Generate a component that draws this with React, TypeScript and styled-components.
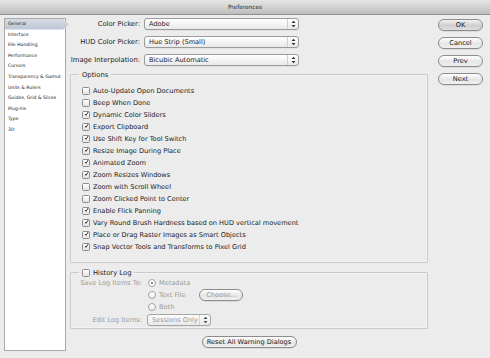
import React from "react";
import styled, { createGlobalStyle } from "styled-components";

const GlobalStyle = createGlobalStyle`
  html, body {
    margin: 0;
    padding: 0;
    background: #ececec;
  }
  body {
    font-family: "DejaVu Sans", "Liberation Sans", sans-serif;
    color: #1c1c1c;
  }
`;

const sections = [
  "General",
  "Interface",
  "File Handling",
  "Performance",
  "Cursors",
  "Transparency & Gamut",
  "Units & Rulers",
  "Guides, Grid & Slices",
  "Plug-Ins",
  "Type",
  "3D",
];

const options: [string, boolean][] = [
  ["Auto-Update Open Documents", false],
  ["Beep When Done", false],
  ["Dynamic Color Sliders", true],
  ["Export Clipboard", true],
  ["Use Shift Key for Tool Switch", true],
  ["Resize Image During Place", true],
  ["Animated Zoom", true],
  ["Zoom Resizes Windows", true],
  ["Zoom with Scroll Wheel", false],
  ["Zoom Clicked Point to Center", false],
  ["Enable Flick Panning", true],
  ["Vary Round Brush Hardness based on HUD vertical movement", true],
  ["Place or Drag Raster Images as Smart Objects", true],
  ["Snap Vector Tools and Transforms to Pixel Grid", true],
];

const Check: React.FC<{ checked?: boolean }> = ({ checked }) => (
  <CheckBox>
    {checked && (
      <svg width="8" height="8" viewBox="0 0 8 8">
        <path
          d="M1.6 3.9 L3.2 6.1 L6.9 0.6"
          fill="none"
          stroke="#1e1e1e"
          strokeWidth="1.4"
        />
      </svg>
    )}
  </CheckBox>
);

const Stepper: React.FC = () => (
  <StepperBox>
    <svg width="5" height="8" viewBox="0 0 5 8">
      <path d="M0.5 3 L2.5 0.8 L4.5 3 Z" fill="#333" />
      <path d="M0.5 5 L2.5 7.2 L4.5 5 Z" fill="#333" />
    </svg>
  </StepperBox>
);

const App: React.FC = () => {
  return (
    <Window>
      <GlobalStyle />
      <TitleBar>Preferences</TitleBar>
      <Main>
        <Sidebar>
          {sections.map((s, i) => (
            <SideItem key={s} $active={i === 0}>
              {s}
            </SideItem>
          ))}
        </Sidebar>

        <Content>
          <PickerGrid>
            <FieldLabel>Color Picker:</FieldLabel>
            <Select $width={155}>
              <span>Adobe</span>
              <Stepper />
            </Select>
            <FieldLabel>HUD Color Picker:</FieldLabel>
            <Select $width={155}>
              <span>Hue Strip (Small)</span>
              <Stepper />
            </Select>
            <FieldLabel>Image Interpolation:</FieldLabel>
            <Select $width={155}>
              <span>Bicubic Automatic</span>
              <Stepper />
            </Select>
          </PickerGrid>

          <GroupBox $pad="10px 0 9px 11px">
            <Legend>Options</Legend>
            {options.map(([label, on]) => (
              <CheckRow key={label}>
                <Check checked={on} />
                <span>{label}</span>
              </CheckRow>
            ))}
          </GroupBox>

          <GroupBox $pad="4px 0 3px 0" $gap={10}>
            <Legend>
              <Check />
              <span>History Log</span>
            </Legend>
            <LogGrid>
              <LogLabel>Save Log Items To:</LogLabel>
              <RadioRow>
                <Radio $on />
                <span>Metadata</span>
              </RadioRow>
              <span />
              <RadioRow>
                <Radio />
                <span>Text File</span>
                <PillButton $width={44} $disabled>
                  Choose...
                </PillButton>
              </RadioRow>
              <span />
              <RadioRow>
                <Radio />
                <span>Both</span>
              </RadioRow>
              <LogLabel $top={2}>Edit Log Items:</LogLabel>
              <EditCell>
                <Select $width={64} $disabled>
                  <span>Sessions Only</span>
                  <Stepper />
                </Select>
              </EditCell>
            </LogGrid>
          </GroupBox>

          <Footer>
            <PillButton $width={95}>Reset All Warning Dialogs</PillButton>
          </Footer>
        </Content>

        <ButtonColumn>
          <PillButton $width={45} $default>
            OK
          </PillButton>
          <PillButton $width={45}>Cancel</PillButton>
          <PillButton $width={45}>Prev</PillButton>
          <PillButton $width={45}>Next</PillButton>
        </ButtonColumn>
      </Main>
    </Window>
  );
};

const Window = styled.div`
  width: 490px;
  height: 358px;
  display: flex;
  flex-direction: column;
  background: #ececec;
  overflow: hidden;
`;

const TitleBar = styled.div`
  height: 14px;
  border-bottom: 1px solid #8f8f8f;
  background: linear-gradient(#e6e6e6, #bdbdbd);
  display: flex;
  align-items: center;
  justify-content: center;
  font-size: 5.8px;
  color: #2a2a2a;
`;

const Main = styled.div`
  display: flex;
  padding-top: 3px;
`;

const Sidebar = styled.div`
  width: 60px;
  height: 331px;
  margin-left: 4px;
  border: 1px solid #a9a9a9;
  background: #fff;
  position: relative;
`;

const SideItem = styled.div<{ $active?: boolean }>`
  height: 10.6px;
  line-height: 10.6px;
  padding-left: 3px;
  font-size: 4.6px;
  white-space: nowrap;
  color: #1a1a1a;
  position: relative;
  width: ${({ $active }) => ($active ? "61px" : "auto")};
  background: ${({ $active }) =>
    $active ? "linear-gradient(#d6dce6, #bcc5d2)" : "transparent"};
  clip-path: ${({ $active }) =>
    $active
      ? "polygon(0 0, 58px 0, 64px 50%, 58px 100%, 0 100%)"
      : "none"};
`;

const Content = styled.div`
  width: 358px;
  margin-left: 4px;
  display: flex;
  flex-direction: column;
`;

const PickerGrid = styled.div`
  display: grid;
  grid-template-columns: 70px auto;
  column-gap: 4px;
  row-gap: 6px;
  align-items: center;
  justify-content: start;
  margin-bottom: 8px;
`;

const FieldLabel = styled.div`
  text-align: right;
  font-size: 6.8px;
  white-space: nowrap;
  color: #1a1a1a;
`;

const Select = styled.div<{ $width: number; $disabled?: boolean }>`
  width: ${({ $width }) => $width}px;
  height: 12px;
  box-sizing: border-box;
  border: 1px solid #9a9a9a;
  border-radius: 3px;
  background: linear-gradient(#ffffff, #e9e9e9);
  display: flex;
  align-items: center;
  justify-content: space-between;
  padding-left: 4px;
  font-size: 6.6px;
  color: ${({ $disabled }) => ($disabled ? "#8a8a8a" : "#1a1a1a")};
  opacity: ${({ $disabled }) => ($disabled ? 0.85 : 1)};
  white-space: nowrap;
  box-shadow: 0 0.5px 0 rgba(0, 0, 0, 0.08);
`;

const StepperBox = styled.div`
  width: 10px;
  height: 100%;
  border-left: 1px solid #cfcfcf;
  display: flex;
  align-items: center;
  justify-content: center;
`;

const GroupBox = styled.div<{ $pad: string; $gap?: number }>`
  position: relative;
  border: 1px solid #c9c9c9;
  border-radius: 1px;
  padding: ${({ $pad }) => $pad};
  margin-bottom: ${({ $gap }) => $gap ?? 9}px;
  box-shadow: inset 0 0 0 1px rgba(255, 255, 255, 0.35);
`;

const Legend = styled.div`
  position: absolute;
  top: -6px;
  left: 8px;
  height: 11px;
  padding: 0 3px;
  background: #ececec;
  display: flex;
  align-items: center;
  gap: 3px;
  font-size: 6.8px;
  color: #1a1a1a;
`;

const CheckRow = styled.div`
  height: 12px;
  display: flex;
  align-items: center;
  gap: 3px;
  font-size: 6.6px;
  white-space: nowrap;
  color: #1a1a1a;
`;

const CheckBox = styled.span`
  width: 8px;
  height: 8px;
  box-sizing: border-box;
  border: 1px solid #8c8c8c;
  border-radius: 1.5px;
  background: linear-gradient(#ffffff, #e4e4e4);
  display: inline-flex;
  align-items: center;
  justify-content: center;
  flex-shrink: 0;
  svg {
    margin-top: -2px;
    margin-left: 1px;
  }
`;

const LogGrid = styled.div`
  display: grid;
  grid-template-columns: 71px auto;
  column-gap: 6px;
  grid-auto-rows: 12px;
  align-items: center;
  font-size: 6.6px;
  color: #9a9a9a;
`;

const LogLabel = styled.div<{ $top?: number }>`
  white-space: nowrap;
  height: 100%;
  display: flex;
  align-items: center;
  justify-content: flex-end;
  margin-top: ${({ $top }) => $top ?? 0}px;
`;

const RadioRow = styled.div`
  display: flex;
  align-items: center;
  gap: 3px;
  white-space: nowrap;
  button {
    margin-left: 11px;
  }
`;

const Radio = styled.span<{ $on?: boolean }>`
  width: 8px;
  height: 8px;
  box-sizing: border-box;
  border: 1px solid #a4a4a4;
  border-radius: 50%;
  background: ${({ $on }) =>
    $on
      ? "radial-gradient(circle, #8a8a8a 0 1.2px, #fff 1.6px)"
      : "linear-gradient(#ffffff, #ececec)"};
  flex-shrink: 0;
`;

const EditCell = styled.div`
  margin-top: 2px;
  margin-left: -1px;
`;

const PillButton = styled.button<{
  $width: number;
  $default?: boolean;
  $disabled?: boolean;
}>`
  width: ${({ $width }) => $width}px;
  height: 12px;
  box-sizing: border-box;
  padding: 0;
  border: 1px solid #8d8d8d;
  border-radius: 6px;
  background: ${({ $default }) =>
    $default
      ? "linear-gradient(#f2f2f2, #cfcfcf 55%, #dedede)"
      : "linear-gradient(#ffffff, #e6e6e6 55%, #f0f0f0)"};
  font-family: "DejaVu Sans", "Liberation Sans", sans-serif;
  font-size: 6.6px;
  font-weight: normal;
  color: ${({ $disabled }) => ($disabled ? "#9a9a9a" : "#1a1a1a")};
  display: flex;
  align-items: center;
  justify-content: center;
  white-space: nowrap;
  box-shadow: 0 0.5px 0.5px rgba(0, 0, 0, 0.15);
`;

const Footer = styled.div`
  display: flex;
  justify-content: center;
  margin-top: -3px;
`;

const ButtonColumn = styled.div`
  margin-left: 10px;
  padding-top: 1px;
  display: flex;
  flex-direction: column;
  gap: 6px;
`;

export default App;
